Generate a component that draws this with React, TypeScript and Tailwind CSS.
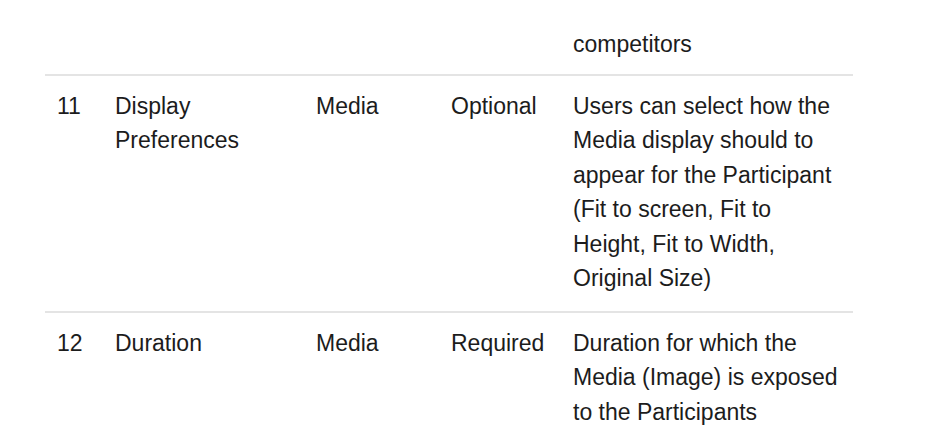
export default function App() {
  const rows: { n: string; name: string; type: string; req: string; desc: string }[] = [
    {
      n: "11",
      name: "Display Preferences",
      type: "Media",
      req: "Optional",
      desc: "Users can select how the Media display should to appear for the Participant (Fit to screen, Fit to Height, Fit to Width, Original Size)",
    },
    {
      n: "12",
      name: "Duration",
      type: "Media",
      req: "Required",
      desc: "Duration for which the Media (Image) is exposed to the Participants",
    },
  ];
  return (
    <div
      className="w-[934px] h-[448px] overflow-hidden bg-white text-[23px] leading-[34.5px] text-[#1c1c1c]"
      style={{ fontFamily: '"Liberation Sans", Arial, sans-serif' }}
    >
      <table className="ml-[45px] w-[808px] table-fixed border-collapse">
        <colgroup>
          <col className="w-[58px]" />
          <col className="w-[201px]" />
          <col className="w-[135px]" />
          <col className="w-[122px]" />
          <col className="w-[292px]" />
        </colgroup>
        <tbody>
          <tr className="border-b-2 border-[#e4e4e4]">
            <td className="px-3 pt-[27px] pb-[12px]" />
            <td className="px-3 pt-[27px] pb-[12px]" />
            <td className="px-3 pt-[27px] pb-[12px]" />
            <td className="px-3 pt-[27px] pb-[12px]" />
            <td className="px-3 pt-[27px] pb-[12px] align-top">competitors</td>
          </tr>
          {rows.map((r, i) => (
            <tr key={r.n} className={i === 0 ? "border-b-2 border-[#e4e4e4]" : ""}>
              <td className="px-3 pt-[13px] pb-[15px] align-top">{r.n}</td>
              <td className="px-3 pt-[13px] pb-[15px] align-top">{r.name}</td>
              <td className="px-3 pt-[13px] pb-[15px] align-top">{r.type}</td>
              <td className="px-3 pt-[13px] pb-[15px] align-top">{r.req}</td>
              <td className="px-3 pt-[13px] pb-[15px] align-top">{r.desc}</td>
            </tr>
          ))}
        </tbody>
      </table>
    </div>
  );
}
